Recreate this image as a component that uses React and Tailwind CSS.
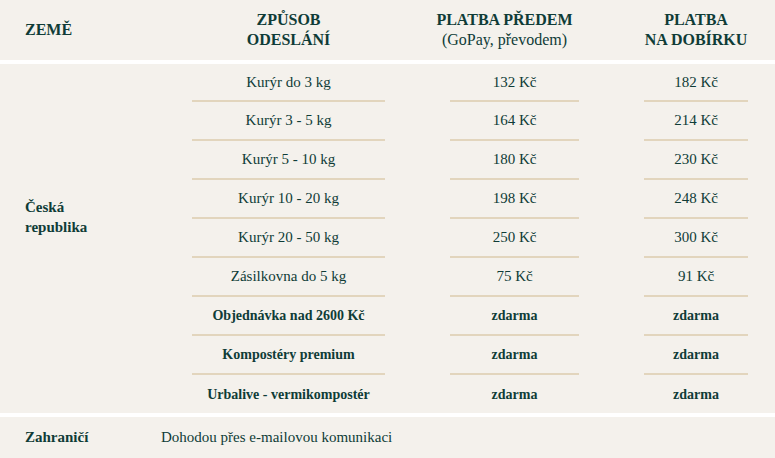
import React from 'react'

const rows = [
  { method: 'Kurýr do 3 kg', pre: '132 Kč', cod: '182 Kč' },
  { method: 'Kurýr 3 - 5 kg', pre: '164 Kč', cod: '214 Kč' },
  { method: 'Kurýr 5 - 10 kg', pre: '180 Kč', cod: '230 Kč' },
  { method: 'Kurýr 10 - 20 kg', pre: '198 Kč', cod: '248 Kč' },
  { method: 'Kurýr 20 - 50 kg', pre: '250 Kč', cod: '300 Kč' },
  { method: 'Zásilkovna do 5 kg', pre: '75 Kč', cod: '91 Kč' },
  { method: 'Objednávka nad 2600 Kč', pre: 'zdarma', cod: 'zdarma', bold: true },
  { method: 'Kompostéry premium', pre: 'zdarma', cod: 'zdarma', bold: true },
  { method: 'Urbalive - vermikompostér', pre: 'zdarma', cod: 'zdarma', bold: true },
]

function App() {
  return (
    <div
      className="w-[775px] h-[458px] bg-[#f4f1ec] text-[#0f3c37] overflow-hidden"
      style={{ fontFamily: '"Liberation Serif", "DejaVu Serif", serif' }}
    >
      {/* hlavička */}
      <div className="h-[60px] flex items-center text-[16px] font-bold leading-[20px] uppercase">
        <div className="w-[192px] shrink-0 pl-[25px]">Země</div>
        <div className="w-[193px] shrink-0 flex justify-center text-center">
          <div className="whitespace-nowrap">Způsob<br />Odeslání</div>
        </div>
        <div className="w-[129px] shrink-0 ml-[55px] mr-[10px] flex justify-center text-center">
          <div className="whitespace-nowrap">
            Platba předem
            <div className="normal-case font-normal">(GoPay, převodem)</div>
          </div>
        </div>
        <div className="w-[104px] shrink-0 ml-[65px] flex justify-center text-center">
          <div className="whitespace-nowrap">Platba<br />na dobírku</div>
        </div>
      </div>
      <div className="h-1 bg-white"></div>

      {/* tělo */}
      <div className="flex h-[349px]">
        <div className="w-[192px] shrink-0 pl-[25px] pb-11 flex flex-col justify-center text-[15px] font-bold leading-[20px]">
          <span>Česká</span>
          <span>republika</span>
        </div>
        <div className="flex flex-col">
          {rows.map((r, i) => {
            const last = i === rows.length - 1
            const h = i === 0 || last ? 'h-[38px]' : 'h-[39px]'
            const border = last ? '' : 'border-b-2 border-[#e2d5bd]'
            const weight = r.bold ? 'font-bold text-[14px]' : 'text-[15px]'
            return (
              <div key={i} className={`flex ${weight}`}>
                <div className={`w-[193px] ${h} ${border} flex items-center justify-center whitespace-nowrap`}>{r.method}</div>
                <div className={`w-[129px] ml-[65px] ${h} ${border} flex items-center justify-center`}>{r.pre}</div>
                <div className={`w-[104px] ml-[65px] ${h} ${border} flex items-center justify-center`}>{r.cod}</div>
              </div>
            )
          })}
        </div>
      </div>
      <div className="h-1 bg-white"></div>

      {/* zahraničí */}
      <div className="h-[41px] flex items-center text-[15px]">
        <div className="w-[161px] shrink-0 pl-[25px] font-bold">Zahraničí</div>
        <div>Dohodou přes e-mailovou komunikaci</div>
      </div>
    </div>
  )
}

export default App
